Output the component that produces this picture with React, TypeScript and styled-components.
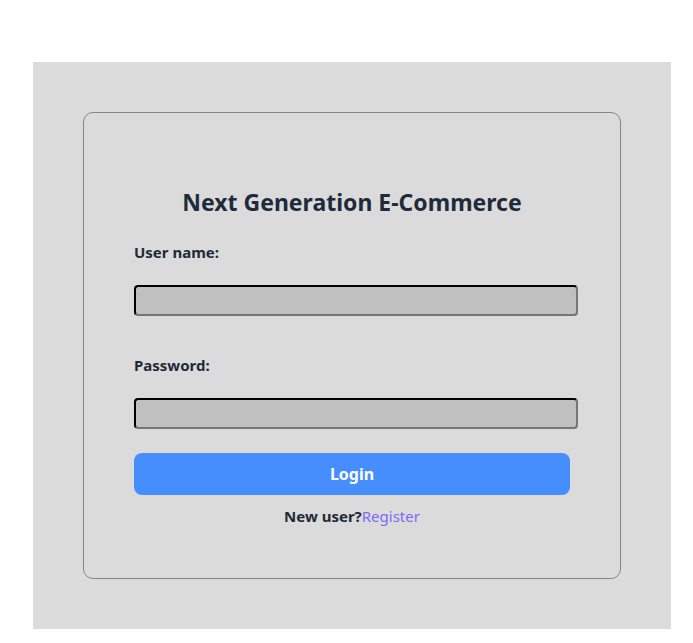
import { createGlobalStyle } from 'styled-components';
import styled from 'styled-components';

const GlobalStyle = createGlobalStyle`
  body {
    margin: 0;
    background: #ffffff;
    font-family: 'Noto Sans', 'Open Sans', sans-serif;
  }
`;

const Panel = styled.main`
  width: 638px;
  margin: 62px 0 14px 33px;
  padding: 50px;
  box-sizing: border-box;
  background-color: #dbdbdb;
`;

const Card = styled.form`
  display: flex;
  flex-direction: column;
  padding: 50px;
  border: 1px solid #858585;
  border-radius: 10px;
`;

const Title = styled.h1`
  margin: 24px 0 25px;
  font-size: 23px;
  line-height: 30px;
  font-weight: 700;
  color: #1e2b3c;
  text-align: center;
`;

const Label = styled.label<{ gapTop?: number }>`
  display: block;
  margin-top: ${({ gapTop = 0 }) => gapTop}px;
  font-size: 15px;
  line-height: 20px;
  font-weight: 700;
  color: #1f2a37;
`;

const Input = styled.input`
  width: 100%;
  height: 23px;
  margin-top: 23px;
  padding: 2px;
  box-sizing: content-box;
  border: 2px inset #767676;
  border-top-color: #1f1f1f;
  border-left-color: #1f1f1f;
  border-radius: 4px;
  background-color: #c0c0c0;
  font-size: 15px;
`;

const LoginButton = styled.button`
  width: 100%;
  height: 42px;
  margin-top: 24px;
  border: none;
  border-radius: 8px;
  background-color: #468dfe;
  color: #ffffff;
  font-family: inherit;
  font-size: 16px;
  font-weight: 700;
`;

const Footer = styled.p`
  margin: 11px 0 2px;
  font-size: 15px;
  line-height: 20px;
  text-align: center;
  font-weight: 700;
  color: #1f2a37;
`;

const RegisterLink = styled.a`
  font-weight: 400;
  color: #7a6cf5;
  text-decoration: none;
`;

export default function App() {
  return (
    <>
      <GlobalStyle />
      <Panel>
        <Card onSubmit={(e) => e.preventDefault()}>
          <Title>Next Generation E-Commerce</Title>
          <Label htmlFor="username">User name:</Label>
          <Input id="username" type="text" />
          <Label htmlFor="password" gapTop={39}>
            Password:
          </Label>
          <Input id="password" type="password" />
          <LoginButton type="submit">Login</LoginButton>
          <Footer>
            New user?<RegisterLink href="#">Register</RegisterLink>
          </Footer>
        </Card>
      </Panel>
    </>
  );
}
